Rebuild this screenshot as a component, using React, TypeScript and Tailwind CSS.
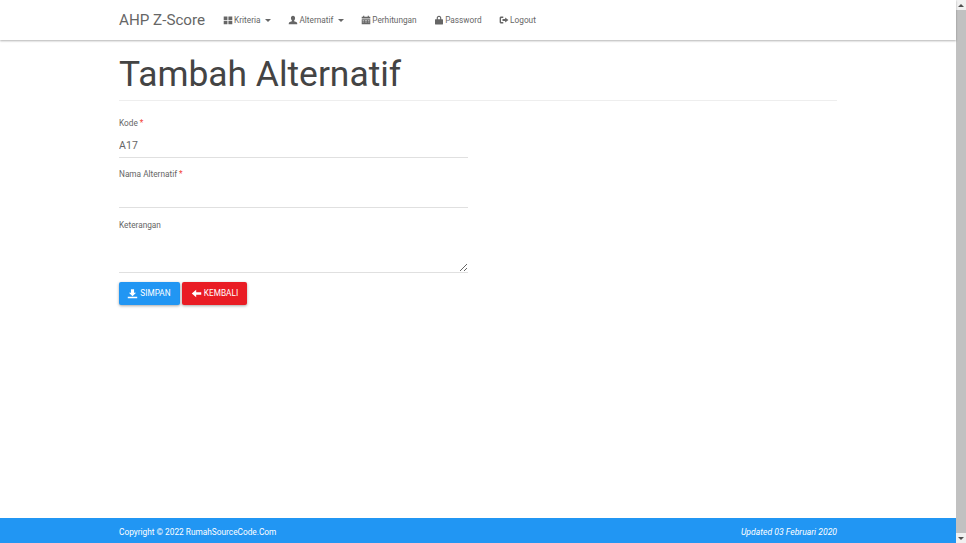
const roboto = "font-['Roboto',sans-serif]";

function Caret() {
  return <span className="ml-[3px] inline-block h-0 w-0 border-x-[3px] border-t-[3px] border-x-transparent border-t-[#666]" />;
}

const icons: Record<string, React.ReactNode> = {
  grid: <path d="M1 2h5.2v5H1zM7.6 2H13v5H7.6zM1 8.2h5.2v4.6H1zM7.6 8.2H13v4.6H7.6z" />,
  user: <path d="M7 1.2c1.8 0 2.9 1.3 2.9 3.2 0 1.4-.6 2.6-1.4 3.3v1.2c1.8.5 3.9 1.2 4.3 2.2l.2 1.9H1l.2-1.9c.4-1 2.5-1.7 4.3-2.2V7.7C4.7 7 4.1 5.8 4.1 4.4 4.1 2.5 5.2 1.2 7 1.2z" />,
  calendar: <path d="M3 1h1.6v1.4h4.8V1H11v1.4h2V5H1V2.4h2zM1 6h12v7H1zm1.2 1v.8h2.2V7zm3.3 0v.8h3V7zm4.1 0v.8h2.2V7zM2.2 9.4v.8h2.2v-.8zm3.3 0v.8h3v-.8zm4.1 0v.8h2.2v-.8z" fillRule="evenodd" />,
  lock: <path d="M7 1.2c2 0 3.2 1.3 3.2 3.2V6H12c.4 0 .6.3.6.6v6c0 .4-.2.6-.6.6H2c-.4 0-.6-.2-.6-.6v-6c0-.3.2-.6.6-.6h1.8V4.4C3.8 2.5 5 1.2 7 1.2zM5.4 6h3.2V4.4c0-1-.6-1.7-1.6-1.7s-1.6.7-1.6 1.7z" fillRule="evenodd" />,
  logout: <path d="M6 2.2v1.9H3.6c-.5 0-.8.3-.8.8v4.2c0 .5.3.8.8.8H6v1.9H3c-1.3 0-2.1-.8-2.1-2.1V4.3C.9 3 1.7 2.2 3 2.2zM8.6 3.6 13.2 7l-4.6 3.4V8.3H4.9V5.7h3.7z" fillRule="evenodd" />,
  download: <path d="M5 1.5h4v4.6h2.6L7 10.6 2.4 6.1H5zM1 11.2h12V13H1z" />,
  back: <path d="M6.6 2.2v3.1H13v3.4H6.6v3.1L1 7z" />,
};

function Icon({ name, className }: { name: string; className?: string }) {
  return (
    <svg viewBox="0 0 14 14" fill="currentColor" className={className ?? "h-[10px] w-[10px]"}>
      {icons[name]}
    </svg>
  );
}

function NavItem({ icon, label, caret }: { icon: string; label: string; caret?: boolean }) {
  return (
    <a className="flex h-10 items-center gap-[1.5px] px-[8.5px] text-[8.25px] text-[#666]">
      <Icon name={icon} />
      <span>{label}</span>
      {caret && <Caret />}
    </a>
  );
}

function Label({ children, required }: { children: string; required?: boolean }) {
  return (
    <label className="block text-[8.25px] leading-[14px] text-[#666]">
      {children}
      {required && <span className="text-[#f44336]"> *</span>}
    </label>
  );
}

export default function App() {
  return (
    <div className={`flex h-[543px] w-[966px] overflow-hidden bg-white ${roboto}`}>
      <div className="flex w-[956px] flex-col">
        <nav className="z-10 h-10 bg-white shadow-[0_1px_2px_rgba(0,0,0,0.3)]">
          <div className="mx-auto flex w-[718px] items-center">
            <a className="mr-[9px] text-[15.2px] leading-10 text-[#666]">AHP Z-Score</a>
            <NavItem icon="grid" label="Kriteria" caret />
            <NavItem icon="user" label="Alternatif" caret />
            <NavItem icon="calendar" label="Perhitungan" />
            <NavItem icon="lock" label="Password" />
            <NavItem icon="logout" label="Logout" />
          </div>
        </nav>

        <main className="mx-auto w-[718px] flex-1">
          <h1 className="mt-[11px] border-b border-[#eee] pb-[2px] text-[35.4px] leading-[47px] font-normal text-[#444]">
            Tambah Alternatif
          </h1>

          <form className="mt-[15px] w-[349px]">
            <div>
              <Label required>Kode</Label>
              <input
                readOnly
                value="A17"
                className="mt-[2px] block h-[26px] w-full border-b border-[#e0e0e0] pt-[1.5px] text-[10.5px] tracking-[0.1px] text-[#666] outline-none"
              />
            </div>
            <div className="mt-[9px]">
              <Label required>Nama Alternatif</Label>
              <input className="mt-[2px] block h-[25px] w-full border-b border-[#e0e0e0] outline-none" />
            </div>
            <div className="mt-[10px]">
              <Label>Keterangan</Label>
              <textarea className="mt-[2px] block h-[39px] w-full border-b border-[#e0e0e0] outline-none" />
            </div>
            <div className="mt-[9px] flex gap-[2px]">
              <button
                type="button"
                className="flex h-[23px] w-[61px] items-center justify-center gap-[2px] rounded-[2px] bg-[#2196f3] pr-[1px] text-[8.25px] text-white shadow-[0_1px_3px_rgba(0,0,0,0.35)]"
              >
                <Icon name="download" className="h-[11px] w-[11px]" />
                SIMPAN
              </button>
              <button
                type="button"
                className="flex h-[23px] w-[65px] items-center justify-center gap-[2px] rounded-[2px] bg-[#e91c24] text-[8.25px] text-white shadow-[0_1px_3px_rgba(0,0,0,0.35)]"
              >
                <Icon name="back" className="h-[11px] w-[11px]" />
                KEMBALI
              </button>
            </div>
          </form>
        </main>

        <footer className="h-[25px] bg-[#2196f3] text-[8.3px] leading-[28px] text-white">
          <div className="mx-auto flex w-[718px] justify-between">
            <span>Copyright © 2022 RumahSourceCode.Com</span>
            <em className="text-[8.6px]">Updated 03 Februari 2020</em>
          </div>
        </footer>
      </div>

      <aside className="flex w-[10px] flex-col bg-[#f1f1f1]">
        <div className="flex h-[10px] items-center justify-center">
          <span className="h-0 w-0 border-x-[3px] border-b-[3px] border-x-transparent border-b-[#505050]" />
        </div>
        <div className="flex-1 bg-[#c1c1c1]" />
        <div className="flex h-[10px] items-center justify-center">
          <span className="h-0 w-0 border-x-[3px] border-t-[3px] border-x-transparent border-t-[#505050]" />
        </div>
      </aside>
    </div>
  );
}
